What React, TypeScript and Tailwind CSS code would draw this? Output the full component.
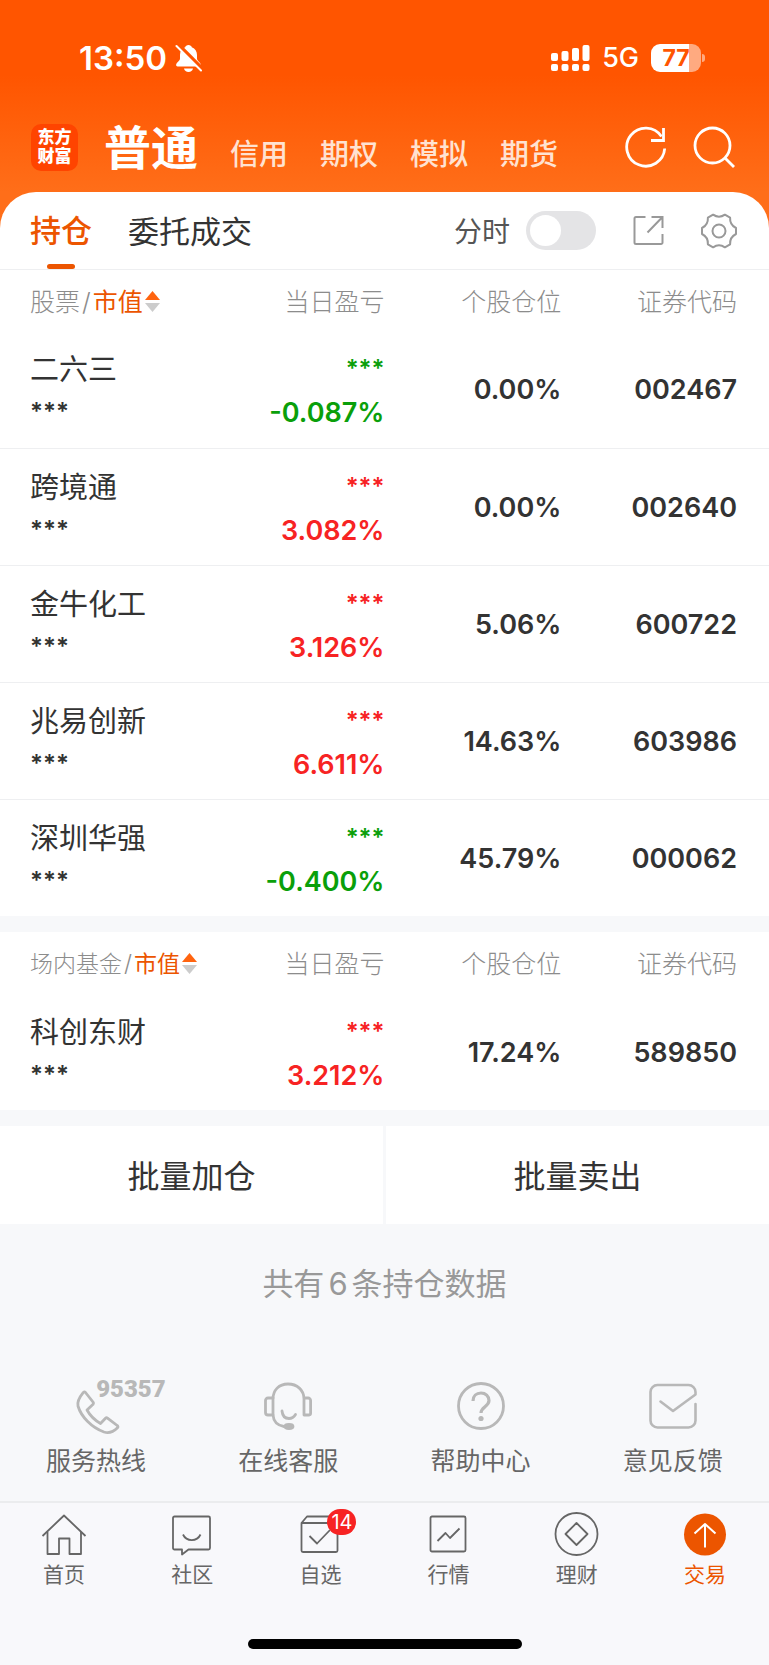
import { useState } from "react"
import type { ReactNode } from "react"

type Holding = {
  name: string
  change: string
  ratio: string
  code: string
}

const stocks: Holding[] = [
  { name: "二六三", change: "-0.087%", ratio: "0.00%", code: "002467" },
  { name: "跨境通", change: "3.082%", ratio: "0.00%", code: "002640" },
  { name: "金牛化工", change: "3.126%", ratio: "5.06%", code: "600722" },
  { name: "兆易创新", change: "6.611%", ratio: "14.63%", code: "603986" },
  { name: "深圳华强", change: "-0.400%", ratio: "45.79%", code: "000062" },
]

const funds: Holding[] = [{ name: "科创东财", change: "3.212%", ratio: "17.24%", code: "589850" }]

const accounts = ["信用", "期权", "模拟", "期货"]

function StatusBar() {
  return (
    <div className="flex h-[114px] items-center justify-between pl-[79px] pr-16 pt-0.5 text-white">
      <div className="flex items-center gap-2">
        <span className="text-[33px] font-semibold leading-10">13:50</span>
        <svg width="27" height="29" viewBox="0 0 27 29" fill="none" aria-hidden="true">
          <path
            d="M13.5 1c-1.8 0-2.9 1-3.3 2.2C6.800 4.500 5 7.400 5 11v3.500c0 2.500-3.900 4-3.900 6.600 0 .900.600 1.400 1.500 1.400h21.800c.900 0 1.500-.500 1.500-1.400 0-2.600-3.900-4.100-3.900-6.600V11c0-3.600-1.800-6.500-5.200-7.800C16.400 2 15.300 1 13.500 1Z"
            fill="currentColor"
          />
          <path d="M9 24.500h9c-.500 2-2.200 3.500-4.500 3.500S9.500 26.500 9 24.500Z" fill="currentColor" />
          <path d="M3 0.500 27 24.500" stroke="#ff5500" strokeWidth="4" />
          <path d="M1.500 2 26 26.500" stroke="currentColor" strokeWidth="2" strokeLinecap="round" />
        </svg>
      </div>
      <div className="flex items-center">
        <svg width="39" height="28" viewBox="0 0 39 28" fill="currentColor" aria-hidden="true">
          <rect x="0" y="9" width="7" height="8" rx="2" />
          <rect x="10.500" y="7" width="7" height="10" rx="2" />
          <rect x="21" y="4" width="7" height="13" rx="2" />
          <rect x="31.500" y="1" width="7" height="16" rx="2" />
          <rect x="0" y="20" width="7" height="7" rx="2" />
          <rect x="10.500" y="20" width="7" height="7" rx="2" />
          <rect x="21" y="20" width="7" height="7" rx="2" />
          <rect x="31.500" y="20" width="7" height="7" rx="2" />
        </svg>
        <span className="ml-3 text-[27px] font-medium leading-8">5G</span>
        <div className="ml-3 flex items-center gap-px">
          <span className="flex h-7 w-[50px] items-center justify-center rounded-[9px] bg-[linear-gradient(90deg,#fff_77%,#ffaa80_77%)] text-[23px] font-bold leading-7 text-[#ff5500]">
            77
          </span>
          <span className="h-2 w-[3px] rounded-r-full bg-[#ffaa80]" />
        </div>
      </div>
    </div>
  )
}

function AccountNav() {
  return (
    <nav className="flex h-[66px] items-center pl-[31px] pr-[34px] text-white">
      <a
        href="#home"
        className="flex size-[47px] shrink-0 flex-col items-center justify-center rounded-[10px] bg-[#ff4400] text-[17px] font-black leading-[19px]"
      >
        <span>东方</span>
        <span>财富</span>
      </a>
      <div className="ml-[26px] flex items-baseline gap-8 pt-0.5">
        <a href="#normal" className="text-[47px] font-bold leading-[56px]">
          普通
        </a>
        {accounts.map((name) => (
          <a key={name} href={"#" + name} className="text-[29px] font-medium leading-10 text-[#ffe2d1]">
            {name}
          </a>
        ))}
      </div>
      <button type="button" aria-label="刷新" className="ml-auto">
        <svg width="42" height="42" viewBox="0 0 42 42" fill="none" stroke="currentColor" strokeWidth="2.800" aria-hidden="true">
          <path d="M39.700 22.500A19 19 0 1 1 36.500 10.500" />
          <path d="M38.500 2v12.500H26" />
        </svg>
      </button>
      <button type="button" aria-label="搜索" className="ml-[26px]">
        <svg width="42" height="42" viewBox="0 0 42 42" fill="none" stroke="currentColor" strokeWidth="2.800" aria-hidden="true">
          <circle cx="19.500" cy="19.500" r="17.500" />
          <path d="M31.500 31.500 41 41" />
        </svg>
      </button>
    </nav>
  )
}

function Toolbar() {
  const [intraday, setIntraday] = useState(false)

  return (
    <div className="flex h-[78px] items-stretch border-b border-[#eeeff1] pl-[30px] pr-8">
      <button type="button" className="flex flex-col items-center text-[31px] font-medium text-[#ec5500]">
        <span className="flex flex-1 items-center pt-1.5 leading-10">持仓</span>
        <span className="h-[5px] w-7 rounded-[3px] bg-[#ec5500]" />
      </button>
      <button type="button" className="ml-9 pt-0.5 text-[31px] leading-10 text-[#333]">
        委托成交
      </button>
      <label className="ml-auto flex items-center gap-4 text-[28px] text-[#555]">
        <span className="pt-0.5">分时</span>
        <input
          type="checkbox"
          checked={intraday}
          onChange={(e) => setIntraday(e.target.checked)}
          className="h-[39px] w-[70px] appearance-none rounded-full bg-[#e4e4e6] p-1 before:block before:size-[31px] before:rounded-full before:bg-white before:transition-transform checked:bg-[#ec5500] checked:before:translate-x-[31px]"
        />
      </label>
      <button type="button" aria-label="分享" className="ml-[37px] text-[#999]">
        <svg width="31" height="31" viewBox="0 0 31 31" fill="none" stroke="currentColor" strokeWidth="2" aria-hidden="true">
          <path d="M12.500 2H3a1.500 1.500 0 0 0-1.500 1.500v24A1.500 1.500 0 0 0 3 29h25a1.500 1.500 0 0 0 1.500-1.500V19" />
          <path d="M18.500 2h11v11M29 2.500 14.500 17.500" />
        </svg>
      </button>
      <button type="button" aria-label="设置" className="ml-[37px] text-[#999]">
        <svg width="36" height="36" viewBox="0 0 36 36" fill="none" stroke="currentColor" strokeWidth="2" strokeLinejoin="round" aria-hidden="true">
          <path d="M35 15V21Q28.700 24.200 29.100 31.300L23.900 34.300Q18 30.300 12.100 34.300L6.900 31.300Q7.300 24.200 1 21V15Q7.300 11.800 6.900 4.700L12.100 1.700Q18 5.700 23.900 1.700L29.100 4.700Q28.700 11.800 35 15Z" />
          <circle cx="18" cy="18" r="6.500" />
        </svg>
      </button>
    </div>
  )
}

function SortArrows() {
  return (
    <svg width="15" height="21" viewBox="0 0 15 21" className="ml-0.5" aria-hidden="true">
      <path d="M7.500 0 15 9H0Z" fill="#ff6410" />
      <path d="M7.500 21 15 12H0Z" fill="#ccc" />
    </svg>
  )
}

function HoldingTable({ title, compact, rows }: { title: string; compact?: boolean; rows: Holding[] }) {
  return (
    <table className="w-full table-fixed border-collapse bg-white">
      <colgroup>
        <col className="w-[27%]" />
        <col className="w-[23%]" />
        <col className="w-[23%]" />
        <col className="w-[27%]" />
      </colgroup>
      <thead>
        <tr className="h-[61px] whitespace-nowrap text-right text-[25px] leading-8 text-[#8c8c8c]">
          <th className="pl-[30px] pt-0.5 text-left font-light">
            <button type="button" className={"flex items-center " + (compact ? "text-[23px]" : "text-[25px]")}>
              {title}
              <span className="mx-0.5">/</span>
              <span className="font-normal text-[#ec5500]">市值</span>
              <SortArrows />
            </button>
          </th>
          <th className="pt-0.5 font-light">当日盈亏</th>
          <th className="pt-0.5 font-light">个股仓位</th>
          <th className="pr-8 pt-0.5 font-light">证券代码</th>
        </tr>
      </thead>
      <tbody>
        {rows.map((row) => (
          <tr
            key={row.code}
            className="h-[117px] border-b border-[#eeeff1] text-right text-[27px] font-semibold leading-[38px] text-[#333] last:border-b-0"
          >
            <td className="whitespace-nowrap pl-[30px] pt-1 text-left">
              <div className="text-[29px] font-normal">{row.name}</div>
              <div className="mt-1 text-2xl leading-[38px]">***</div>
            </td>
            <td className={"pt-1 " + (row.change.startsWith("-") ? "text-[#0a9f0a]" : "text-[#f72323]")}>
              <div className="text-2xl leading-[38px]">***</div>
              <div className="mt-1.5">{row.change}</div>
            </td>
            <td className="pt-0.5">{row.ratio}</td>
            <td className="pr-8 pt-0.5">{row.code}</td>
          </tr>
        ))}
      </tbody>
    </table>
  )
}

function Service({ label, children }: { label: string; children: ReactNode }) {
  return (
    <a href={"#" + label} className="flex flex-col items-center gap-3 text-[25px] leading-9 text-[#666]">
      <span className="relative flex size-[50px] items-center justify-center text-[#b8b8b8]">{children}</span>
      {label}
    </a>
  )
}

function Services() {
  return (
    <div className="grid grid-cols-4">
      <Service label="服务热线">
        <svg
          width="50"
          height="50"
          viewBox="0 0 50 50"
          fill="none"
          stroke="currentColor"
          strokeWidth="2.800"
          strokeLinejoin="round"
          className="overflow-visible"
          aria-hidden="true"
        >
          <path d="M14.500 11.500 22 21c.700.800.700 1.500.100 2.300L16 29c3 5.500 7.500 10 13.500 13.500l5-5.200c.600-.600 1.300-.700 2-.200l9.700 7.400c.900.600 1 1.500.300 2.300-3.200 3.200-7.500 6.200-13.500 4.200C20.500 46.500 10 35.500 7 25c-1-4.500 1-8.300 5-13.200.800-1 1.700-1.100 2.500-.300Z" />
        </svg>
        <span className="absolute -top-1 left-[25px] font-[Roboto] text-2xl font-black leading-6">95357</span>
      </Service>
      <Service label="在线客服">
        <svg width="48" height="48" viewBox="0 0 48 48" fill="none" stroke="currentColor" strokeWidth="2.800" strokeLinecap="round" strokeLinejoin="round" aria-hidden="true">
          <path d="M9 33V17C9 8 15 2 24 2s16 6 16 15v16h5a1.800 1.800 0 0 0 1.600-1.800V18.500A2.500 2.500 0 0 0 44 16H40" />
          <path d="M9 16H4a2.500 2.500 0 0 0-2.500 2.500v12A2.500 2.500 0 0 0 4 33h5c.500 6.500 5 10.500 11 11.500" />
          <path d="M18 29c.500 5 3.500 7.500 7 7.500 2.800 0 5-1.500 6.500-4" />
          <ellipse cx="25" cy="44.500" rx="4" ry="2" fill="currentColor" />
        </svg>
      </Service>
      <Service label="帮助中心">
        <svg width="48" height="48" viewBox="0 0 48 48" fill="none" stroke="currentColor" strokeWidth="2.800" aria-hidden="true">
          <circle cx="24" cy="24" r="22.500" />
          <path d="M16 19c0-5 3.500-8 8-8s8 3 8 7.500c0 6-8 6.500-8 12.500" strokeWidth="3.200" />
          <circle cx="24" cy="36.500" r="2.600" fill="currentColor" stroke="none" />
        </svg>
      </Service>
      <Service label="意见反馈">
        <svg width="48" height="48" viewBox="0 0 48 48" fill="none" stroke="currentColor" strokeWidth="2.600" strokeLinecap="round" strokeLinejoin="round" aria-hidden="true">
          <path d="M11.500 19.500 24 29 46.500 12.500V10a7 7 0 0 0-7-7H8.500a7 7 0 0 0-7 7v28.500a7 7 0 0 0 7 7h31a7 7 0 0 0 7-7V22" />
        </svg>
      </Service>
    </div>
  )
}

function TabItem({ label, active, children }: { label: string; active?: boolean; children: ReactNode }) {
  return (
    <a
      href={"#" + label}
      className={"flex flex-col items-center gap-0.5 text-[21px] leading-8 " + (active ? "text-[#ec5500]" : "text-[#666]")}
    >
      <span className="relative">{children}</span>
      {label}
    </a>
  )
}

const tabIcon = {
  width: 46,
  height: 46,
  viewBox: "0 0 46 46",
  fill: "none",
  stroke: "currentColor",
  strokeWidth: 1.8,
  strokeLinejoin: "round",
  "aria-hidden": true,
} as const

function TabBar() {
  return (
    <nav className="grid grid-cols-6 border-t-2 border-[#ebecee] bg-[#f8f8fb] pt-2">
      <TabItem label="首页">
        <svg {...tabIcon}>
          <path d="M1.500 25 23 4.500 44.500 25" />
          <path d="M6.500 21v22H18V27.500h10.500V43H40V21" />
        </svg>
      </TabItem>
      <TabItem label="社区">
        <svg {...tabIcon}>
          <path d="M5.500 5.500h34A1.500 1.500 0 0 1 41 7v30a1.500 1.500 0 0 1-1.500 1.500h-20l-6.500 5v-5H5.500A1.500 1.500 0 0 1 4 37V7a1.500 1.500 0 0 1 1.500-1.500Z" />
          <path d="M14 23.500c3.500 7.500 14 7.500 17.500 0" />
        </svg>
      </TabItem>
      <TabItem label="自选">
        <svg {...tabIcon}>
          <path d="M4.500 12.500v27A1.500 1.500 0 0 0 6 41h33a1.500 1.500 0 0 0 1.500-1.500v-27L36 5.500H10L4.500 12h36" />
          <path d="M12.500 25 20 32.500 33 19" />
        </svg>
        <span className="absolute -top-0.5 left-[30px] h-[26px] rounded-full bg-[#f72323] px-1 text-xl leading-[26px] text-white">
          14
        </span>
      </TabItem>
      <TabItem label="行情">
        <svg {...tabIcon}>
          <rect x="4.500" y="5.500" width="35" height="35" rx="1.500" />
          <path d="M11.500 30 19.500 22l4.500 5L33.500 17.500" />
        </svg>
      </TabItem>
      <TabItem label="理财">
        <svg {...tabIcon}>
          <circle cx="22.500" cy="23" r="21" />
          <path d="M22.500 12 33.500 23 22.500 34 11.500 23Z" />
        </svg>
      </TabItem>
      <TabItem label="交易" active>
        <svg {...tabIcon}>
          <circle cx="23" cy="23.500" r="21" fill="currentColor" stroke="none" />
          <path d="M23 36.500V13M12.500 22.500 23 13 33.500 22.500" stroke="#fff" strokeWidth="2" />
        </svg>
      </TabItem>
    </nav>
  )
}

export default function App() {
  return (
    <div className="flex min-h-screen flex-col bg-[#f7f8fa] font-[Inter,'Noto_Sans_CJK_SC',sans-serif]">
      <header className="bg-[linear-gradient(180deg,#ff5500_75px,#ff6e19_192px)] pb-12">
        <StatusBar />
        <AccountNav />
      </header>

      <main className="-mt-9 flex flex-1 flex-col">
        <section className="overflow-hidden rounded-t-[36px] bg-white">
          <Toolbar />
          <HoldingTable title="股票" rows={stocks} />
        </section>
        <section className="mt-4">
          <HoldingTable title="场内基金" compact rows={funds} />
        </section>

        <div className="mt-4 grid grid-cols-2 gap-[3px] text-[32px] leading-10 text-[#333]">
          <button type="button" className="h-[98px] bg-white pt-1">
            批量加仓
          </button>
          <button type="button" className="h-[98px] bg-white pt-1">
            批量卖出
          </button>
        </div>

        <p className="mt-10 text-center text-[31px] leading-10 text-[#999]">
          共有<span className="mx-1">6</span>条持仓数据
        </p>

        <div className="mt-auto pb-[22px]">
          <Services />
        </div>
      </main>

      <footer className="bg-[#f8f8fb]">
        <TabBar />
        <div className="mx-auto mb-4 mt-12 h-2.5 w-[274px] rounded-full bg-black" />
      </footer>
    </div>
  )
}
